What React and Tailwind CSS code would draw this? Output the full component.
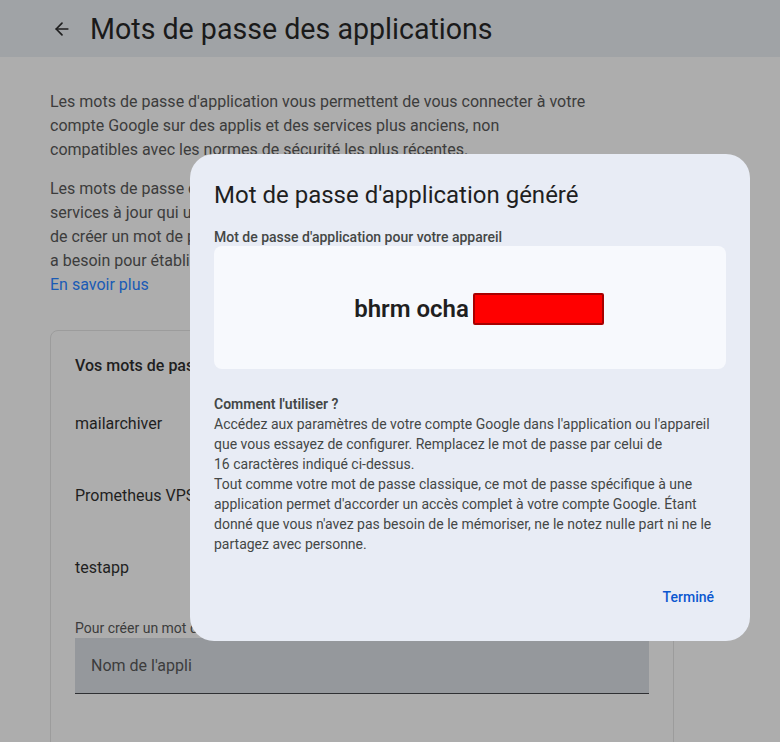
import { ArrowLeft } from 'lucide-react'

const APPS = ['mailarchiver', 'Prometheus VPS', 'testapp']

const GeneratedPasswordDialog = () => (
  <div className="absolute left-[190px] top-[154px] h-[487px] w-[560px] rounded-[24px] bg-[#e8ecf5] px-6 pt-[26px]">
    <h2 className="text-[24px] leading-[30px] text-[#1f1f1f]">Mot de passe d'application généré</h2>
    <p className="mt-[18px] text-[14px] font-medium leading-[18px] text-[#444746]">
      Mot de passe d'application pour votre appareil
    </p>
    <div className="flex h-[123px] items-center justify-center rounded-lg bg-[#f7f9fd] pl-[18px] pt-[2px]">
      <span className="text-[24px] font-semibold leading-[30px] text-[#1f1f1f]">bhrm ocha</span>
      <span className="ml-[4px] h-[32px] w-[131px] rounded-[2px] border-2 border-[#a80000] bg-[#ff0000]" />
    </div>
    <h3 className="mt-[25px] text-[14px] font-semibold leading-[20px] text-[#444746]">Comment l'utiliser ?</h3>
    <p className="text-[14px] leading-[20px] text-[#444746]">
      Accédez aux paramètres de votre compte Google dans l'application ou l'appareil que vous essayez de
      configurer. Remplacez le mot de passe par celui de
      <br />
      16 caractères indiqué ci-dessus.
      <br />
      Tout comme votre mot de passe classique, ce mot de passe spécifique à une application permet d'accorder
      un accès complet à votre compte Google. Étant donné que vous n'avez pas besoin de le mémoriser, ne le
      notez nulle part ni ne le partagez avec personne.
    </p>
    <div className="mt-[33px] flex justify-end pr-[12px]">
      <button className="text-[14px] font-medium text-[#0b57d0]">Terminé</button>
    </div>
  </div>
)

export default function App() {
  return (
    <div
      className="relative h-[742px] w-[780px] overflow-hidden bg-[#adadad]"
      style={{ fontFamily: 'Roboto, "Liberation Sans", sans-serif' }}
    >
      <header className="flex h-[57px] items-center bg-[#a0a3a6] pl-[52px]">
        <ArrowLeft className="h-[20px] w-[20px] text-[#1f1f1f]" strokeWidth={2} />
        <h1 className="ml-[18px] text-[28.6px] leading-[36px] text-[#1a1a1a]">Mots de passe des applications</h1>
      </header>

      <main className="px-[50px] pt-[33px]">
        <p className="w-[640px] text-[16px] leading-[24px] text-[#3c3c3c]">
          Les mots de passe d'application vous permettent de vous connecter à votre
          <br />
          compte Google sur des applis et des services plus anciens, non
          <br />
          compatibles avec les normes de sécurité les plus récentes.
        </p>
        <p className="mt-[15px] w-[640px] text-[16px] leading-[24px] text-[#3c3c3c]">
          Les mots de passe d'application sont moins sécurisés que l'utilisation d'applis et de
          <br />
          services à jour qui utilisent des normes de sécurité modernes. Avant
          <br />
          de créer un mot de passe d'application, vérifiez si votre appli en
          <br />
          a besoin pour établir la connexion.
        </p>
        <a className="block text-[16px] leading-[24px] text-[#1a5bb5]">En savoir plus</a>

        <section className="mt-[33px] h-[420px] w-[624px] rounded-lg border border-[#9c9c9c] px-6 pt-[23px]">
          <h2 className="text-[16px] font-medium leading-[24px] text-[#1f1f1f]">Vos mots de passe d'application</h2>
          <ul className="mt-[34px]">
            {APPS.map((app) => (
              <li key={app} className="flex h-[72px] items-start text-[16px] leading-[24px] text-[#1f1f1f]">
                {app}
              </li>
            ))}
          </ul>
          <p className="-mt-[10px] text-[14px] leading-[20px] text-[#3c3c3c]">
            Pour créer un mot de passe spécifique à une application, saisissez un nom ci-dessous…
          </p>
          <div className="flex h-[56px] items-center border-b border-[#2f3033] bg-[#95989c] px-4 text-[16px] text-[#3c3c3c]">
            Nom de l'appli
          </div>
        </section>
      </main>

      <GeneratedPasswordDialog />
    </div>
  )
}
